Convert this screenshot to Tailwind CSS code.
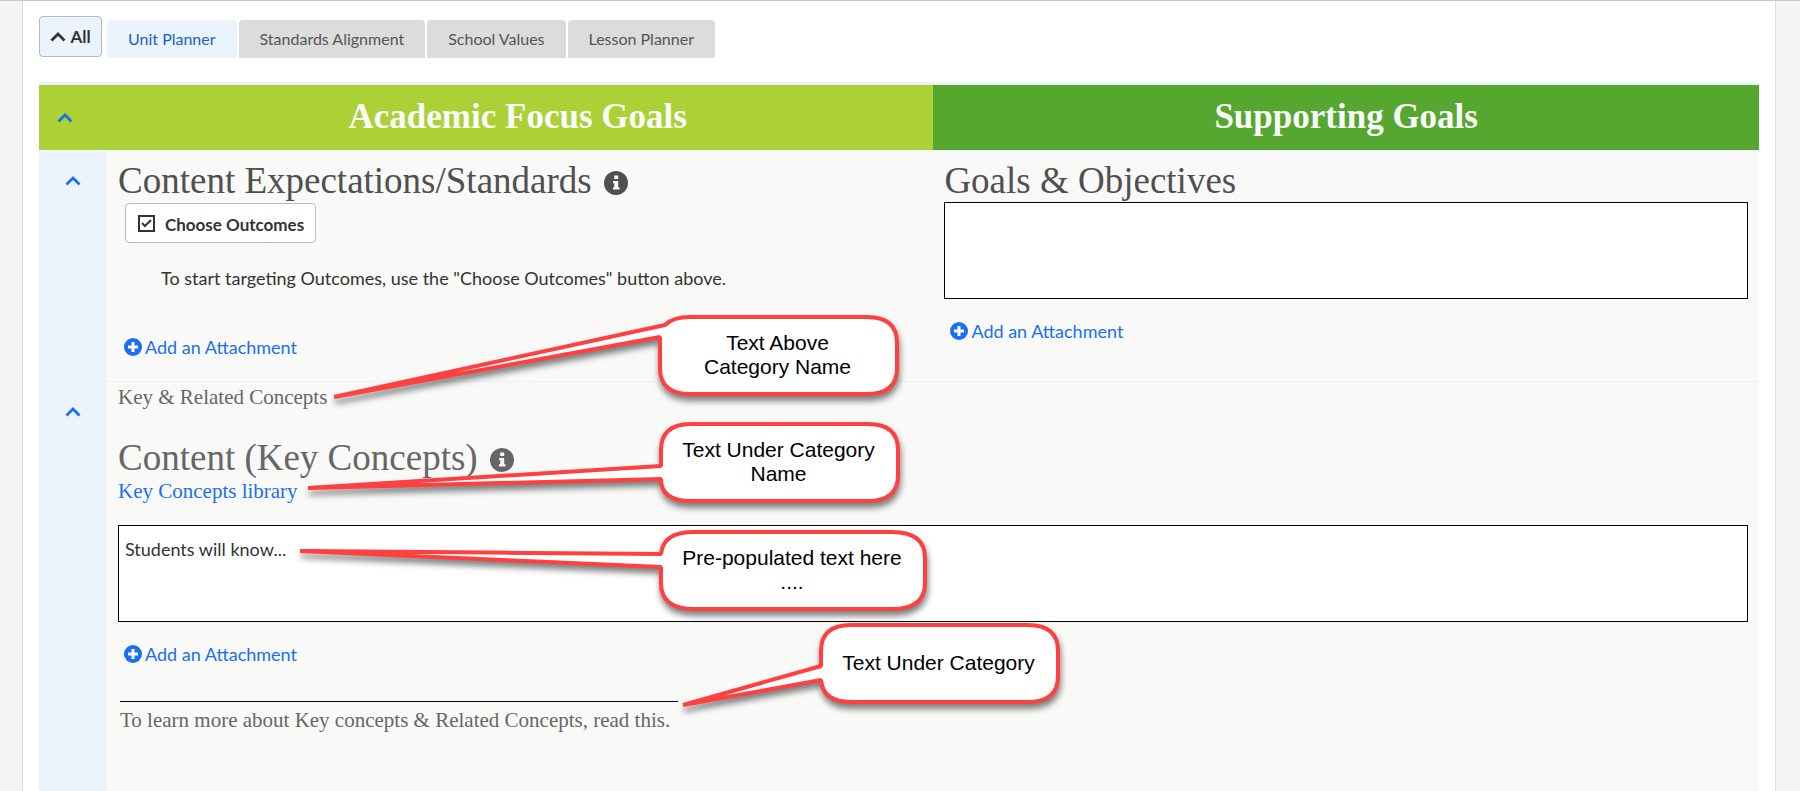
<!DOCTYPE html>
<html lang="en">

<head>
  <meta charset="UTF-8">
  <meta name="viewport" content="width=device-width, initial-scale=1.0">
  <title>Unit Planner</title>
  <script src="https://cdn.jsdelivr.net/npm/@tailwindcss/browser@4"></script>
</head>

<body class="bg-[#f4f4f4] font-['Lato',sans-serif] text-[#333]">
  <!-- shared icons -->
  <svg class="hidden">
    <symbol id="chevron" viewBox="0 0 16 10">
      <path d="M1.5 8.5 8 2l6.500 6.500" fill="none" stroke="currentColor" stroke-width="2.800" />
    </symbol>
    <symbol id="plus" viewBox="0 0 18 18">
      <circle cx="9" cy="9" r="9" fill="currentColor" />
      <path d="M9 4v10M4 9h10" stroke="#f9f9f8" stroke-width="3" />
    </symbol>
    <symbol id="info" viewBox="0 0 24 24">
      <circle cx="12" cy="12" r="12" fill="currentColor" />
      <path d="M10.200 4.500h4v3.500h-4zM9 10h5.200v6.200h1.300v2.300H9v-2.300h1.300v-3.900H9z" fill="#f9f9f8" />
    </symbol>
  </svg>

  <main class="relative ml-[22px] mr-6 min-h-screen bg-white border-x border-[#ddd] flex flex-col px-4">
    <nav class="flex pt-4 h-[82px] text-base">
      <button class="mr-[5px] h-[41px] w-[63px] flex items-center justify-center gap-1 rounded border border-[#b5b8bd] bg-[#ebf3fd] text-[17px] font-bold">
        <svg class="w-4 h-[10px]"><use href="#chevron" /></svg>All
      </button>
      <div class="mt-1 flex h-[38px] gap-[2px] text-[#555]">
        <button class="rounded-t bg-[#ebf3fd] px-[21px] text-[#1a5fc8]">Unit Planner</button>
        <button class="rounded-t bg-[#dcdcdc] px-[21px]">Standards Alignment</button>
        <button class="rounded-t bg-[#dcdcdc] px-[21px]">School Values</button>
        <button class="rounded-t bg-[#dcdcdc] px-[21px]">Lesson Planner</button>
      </div>
    </nav>

    <header class="flex h-[69px] border-t-3 border-b border-[#ebf3fd] text-[35px] font-bold text-[#fafafa] font-['Liberation_Serif',serif]">
      <div class="flex w-[52%] items-center bg-[#abd136]">
        <button aria-label="Collapse all" class="w-[51px] flex justify-center text-[#1a6ff0]"><svg class="w-4 h-[10px]"><use href="#chevron" /></svg></button>
        <h1 class="flex-1 text-center pl-3">Academic Focus Goals</h1>
      </div>
      <h1 class="flex w-[48%] items-center justify-center bg-[#56a72f]">Supporting Goals</h1>
    </header>

    <section class="flex h-[230px] bg-[#f9f9f8]">
      <div class="flex w-[52%]">
        <div class="w-[68px] shrink-0 bg-[#ebf3fd] pt-[25px] flex justify-center items-start">
          <button aria-label="Collapse row" class="text-[#1a6ff0]"><svg class="w-4 h-[10px]"><use href="#chevron" /></svg></button>
        </div>
        <div class="flex flex-col items-start pl-[11px] pt-2">
          <h2 class="flex items-center gap-3 text-[37px] leading-[44px] text-[#505050] font-['Liberation_Serif',serif]">
            Content Expectations/Standards
            <svg class="mt-1 size-6"><use href="#info" /></svg>
          </h2>
          <button class="ml-[7px] flex h-10 items-center gap-[9px] rounded border border-[#bbb] bg-white px-[11px] text-[17px] font-bold">
            <svg class="size-[19px]" viewBox="0 0 19 19" fill="none" stroke="currentColor" stroke-width="2">
              <path d="M2 2h15v15H2z" />
              <path d="m5 9 3 3 6-6" />
            </svg>
            <span class="pt-1">Choose Outcomes</span>
          </button>
          <p class="mt-[23px] ml-[43px] text-lg leading-6">To start targeting Outcomes, use the "Choose Outcomes" button above.</p>
          <a href="#" class="mt-[45px] ml-[6px] flex items-center gap-[3px] text-lg leading-6 text-[#1a6ff0]">
            <svg class="size-[18px]"><use href="#plus" /></svg>Add an Attachment
          </a>
        </div>
      </div>
      <div class="flex w-[48%] flex-col items-start px-[11px] pt-2">
        <h2 class="text-[37px] leading-[43px] text-[#505050] font-['Liberation_Serif',serif]"><label for="goals">Goals &amp; Objectives</label></h2>
        <textarea id="goals" class="h-[97px] w-full resize-none border border-black bg-white p-[7px] text-lg"></textarea>
        <a href="#" class="mt-5 ml-[6px] flex items-center gap-[3px] text-lg leading-6 text-[#1a6ff0]">
          <svg class="size-[18px]"><use href="#plus" /></svg>Add an Attachment
        </a>
      </div>
    </section>

    <section class="flex flex-1 bg-[#f9f9f8] text-[#666]">
      <div class="w-[68px] shrink-0 bg-[#ebf3fd] pt-[26px] flex justify-center items-start">
        <button aria-label="Collapse row" class="text-[#1a6ff0]"><svg class="w-4 h-[10px]"><use href="#chevron" /></svg></button>
      </div>
      <div class="flex flex-1 flex-col items-start border-t border-[#e8f2f7] px-[11px] pt-[3px]">
        <p class="text-[21px] leading-6 font-['Liberation_Serif',serif]">Key &amp; Related Concepts</p>
        <h2 class="mt-[27px] flex items-center gap-3 text-[37px] leading-[43px] font-['Liberation_Serif',serif]">
          <label for="concepts">Content (Key Concepts)</label>
          <svg class="mt-1 size-6"><use href="#info" /></svg>
        </h2>
        <a href="#" class="text-[21px] leading-6 text-[#1a6ff0] font-['Liberation_Serif',serif]">Key Concepts library</a>
        <textarea id="concepts" class="mt-[22px] h-[97px] w-full resize-none border border-black bg-white px-[6px] py-[11px] text-lg leading-6 text-[#333]">Students will know...</textarea>
        <a href="#" class="mt-5 ml-[6px] flex items-center gap-[3px] text-lg leading-6 text-[#1a6ff0]">
          <svg class="size-[18px]"><use href="#plus" /></svg>Add an Attachment
        </a>
        <p class="mt-[35px] ml-[2px] w-[558px] border-t border-black pt-[6px] text-[21px] leading-6 font-['Liberation_Serif',serif]">To learn more about Key concepts &amp; Related Concepts, read this.</p>
      </div>
    </section>

    <!-- callouts, each with its pointer drawn to the left of the balloon -->
    <div class="pointer-events-none text-[21px] leading-6 text-black text-center font-['Liberation_Sans',sans-serif]">
      <div class="absolute left-[635px] top-[315px] h-[81px] w-[241px] flex items-center justify-center pb-[2px] pr-[2px]">
        <svg class="absolute inset-0 size-full overflow-visible drop-shadow-[1px_5px_3px_rgba(0,0,0,0.5)]" fill="white" stroke="#ff4040" stroke-width="4" stroke-linejoin="bevel">
          <path d="M7 10Q15 2 32 2H209Q239 2 239 28V53Q239 79 209 79H32Q2 79 2 53V22L-324 82Z" />
        </svg>
        <p class="relative">Text Above<br>Category Name</p>
      </div>
      <div class="absolute left-[636px] top-[422px] h-[81px] w-[241px] flex items-center justify-center pb-[2px] pr-[2px]">
        <svg class="absolute inset-0 size-full overflow-visible drop-shadow-[1px_5px_3px_rgba(0,0,0,0.5)]" fill="white" stroke="#ff4040" stroke-width="4" stroke-linejoin="bevel">
          <path d="M2 44V28Q2 2 32 2H209Q239 2 239 28V53Q239 79 209 79H32Q2 79 2 57L-351 66Z" />
        </svg>
        <p class="relative">Text Under Category<br>Name</p>
      </div>
      <div class="absolute left-[636px] top-[530px] h-[81px] w-[268px] flex items-center justify-center pb-[2px] pr-[2px]">
        <svg class="absolute inset-0 size-full overflow-visible drop-shadow-[1px_5px_3px_rgba(0,0,0,0.5)]" fill="white" stroke="#ff4040" stroke-width="4" stroke-linejoin="bevel">
          <path d="M2 24Q4 2 35 2H233Q266 2 266 28V53Q266 79 233 79H35Q2 79 2 53V37L-359 21Z" />
        </svg>
        <p class="relative">Pre-populated text here<br>....</p>
      </div>
      <div class="absolute left-[796px] top-[623px] h-[81px] w-[241px] flex items-center justify-center pb-[2px] pr-[2px]">
        <svg class="absolute inset-0 size-full overflow-visible drop-shadow-[1px_5px_3px_rgba(0,0,0,0.5)]" fill="white" stroke="#ff4040" stroke-width="4" stroke-linejoin="bevel">
          <path d="M2 43V28Q2 2 32 2H209Q239 2 239 28V53Q239 79 209 79H32Q4 79 2 57L-136 82Z" />
        </svg>
        <p class="relative">Text Under Category</p>
      </div>
    </div>
  </main>
  <div class="fixed inset-x-0 top-0 h-px bg-[#c8c8c8]"></div>
</body>

</html>
